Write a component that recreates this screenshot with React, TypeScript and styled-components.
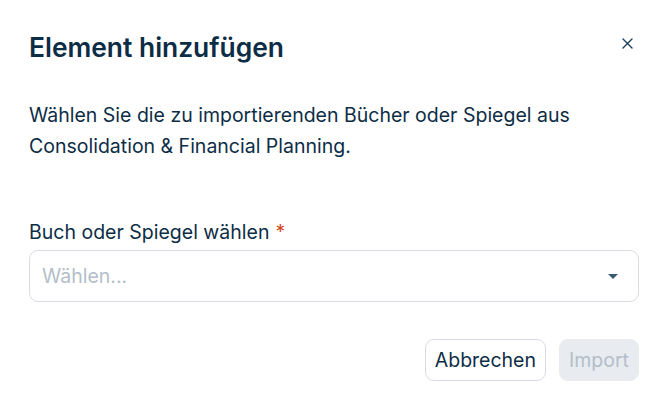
import React from 'react'
import styled, { createGlobalStyle } from 'styled-components'

const GlobalStyle = createGlobalStyle`
  html, body {
    margin: 0;
    padding: 0;
    background: #ffffff;
  }
  body {
    font-family: Inter, "Noto Sans", sans-serif;
    color: #0f2d44;
  }
`

const Dialog = styled.div`
  width: 668px;
  height: 413px;
  box-sizing: border-box;
  padding: 28px 29px 0 29px;
  display: flex;
  flex-direction: column;
  background: #ffffff;
`

const Header = styled.div`
  display: flex;
  align-items: flex-start;
  justify-content: space-between;
  height: 38px;
`

const Title = styled.h2`
  margin: 0;
  font-size: 26.4px;
  line-height: 38px;
  font-weight: 600;
  color: #0d2d46;
`

const CloseButton = styled.button`
  border: none;
  background: none;
  padding: 0;
  width: 20px;
  height: 20px;
  margin: 5px 2px 0 0;
  display: flex;
  align-items: center;
  justify-content: center;
  cursor: pointer;
  color: #1d3f58;
`

const Description = styled.p`
  margin: 34px 0 0 0;
  font-size: 19.5px;
  line-height: 31px;
  color: #0d2d46;
`

const Field = styled.div`
  margin-top: 58px;
  display: flex;
  flex-direction: column;
`

const Label = styled.label`
  font-size: 19.5px;
  line-height: 24px;
  color: #0d2d46;
`

const Required = styled.span`
  color: #d4461f;
  margin-left: 6px;
`

const Select = styled.div`
  margin-top: 6px;
  height: 52px;
  box-sizing: border-box;
  border: 1px solid #d8dde3;
  border-radius: 9px;
  display: flex;
  align-items: center;
  justify-content: space-between;
  padding: 0 20px 0 12px;
`

const Placeholder = styled.span`
  font-size: 19.5px;
  color: #b3bec9;
`

const Caret = styled.span`
  width: 0;
  height: 0;
  border-left: 5px solid transparent;
  border-right: 5px solid transparent;
  border-top: 5px solid #3a5a72;
  margin-top: 1px;
`

const Footer = styled.div`
  margin-top: 37px;
  display: flex;
  justify-content: flex-end;
  gap: 13px;
`

const Button = styled.button<{ $disabled?: boolean }>`
  height: 42px;
  box-sizing: border-box;
  padding: 0 9px;
  border-radius: 9px;
  font-family: Inter, "Noto Sans", sans-serif;
  font-size: 19.5px;
  border: 1px solid ${({ $disabled }) => ($disabled ? '#e8ebef' : '#d8dde3')};
  background: ${({ $disabled }) => ($disabled ? '#e8ebef' : '#ffffff')};
  color: ${({ $disabled }) => ($disabled ? '#b3bec9' : '#0d2d46')};
  cursor: ${({ $disabled }) => ($disabled ? 'default' : 'pointer')};
`

export default function App() {
  return (
    <>
      <GlobalStyle />
      <Dialog>
        <Header>
          <Title>Element hinzufügen</Title>
          <CloseButton aria-label="Schließen">
            <svg width="11" height="11" viewBox="0 0 11 11">
              <path d="M1 1L10 10M10 1L1 10" stroke="currentColor" strokeWidth="1.4" strokeLinecap="round" />
            </svg>
          </CloseButton>
        </Header>
        <Description>
          Wählen Sie die zu importierenden Bücher oder Spiegel aus
          <br />
          Consolidation &amp; Financial Planning.
        </Description>
        <Field>
          <Label>
            Buch oder Spiegel wählen<Required>*</Required>
          </Label>
          <Select>
            <Placeholder>Wählen...</Placeholder>
            <Caret />
          </Select>
        </Field>
        <Footer>
          <Button>Abbrechen</Button>
          <Button $disabled disabled>
            Import
          </Button>
        </Footer>
      </Dialog>
    </>
  )
}
